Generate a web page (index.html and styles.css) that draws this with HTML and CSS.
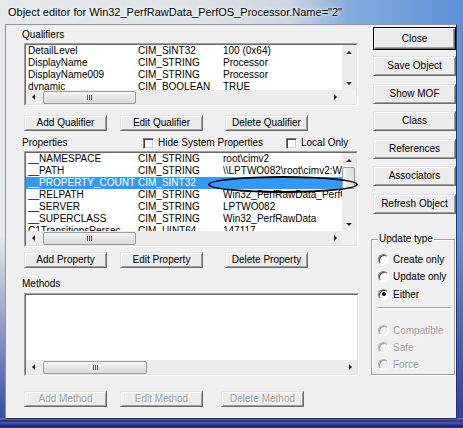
FILE: index.html
```html
<!DOCTYPE html>
<html>
<head>
<meta charset="utf-8">
<title>Object editor</title>
<link rel="stylesheet" href="styles.css">
</head>
<body>
<div class="window">
  <div class="titlebar"><span class="title">Object editor for Win32_PerfRawData_PerfOS_Processor.Name="2"</span></div>
  <div class="client">
    <div class="main">
      <div class="label">Qualifiers</div>
      <div class="listbox lb-qual">
        <div class="lb-inner">
          <div class="rows">
            <div class="row"><span class="c-name">DetailLevel</span><span class="c-type">CIM_SINT32</span><span class="c-val">100 (0x64)</span></div>
            <div class="row"><span class="c-name">DisplayName</span><span class="c-type">CIM_STRING</span><span class="c-val">Processor</span></div>
            <div class="row"><span class="c-name">DisplayName009</span><span class="c-type">CIM_STRING</span><span class="c-val">Processor</span></div>
            <div class="row"><span class="c-name">dynamic</span><span class="c-type">CIM_BOOLEAN</span><span class="c-val">TRUE</span></div>
          </div>
          <div class="vscroll"><span class="arr up"></span><span class="arr down"></span></div>
          <div class="hscroll"><span class="arr left"></span><span class="thumb"><i class="grip"></i></span><span class="spacer"></span><span class="arr right"></span></div>
          <div class="corner"></div>
        </div>
      </div>
      <div class="btnrow">
        <button class="btn">Add Qualifier</button>
        <button class="btn">Edit Qualifier</button>
        <button class="btn del">Delete Qualifier</button>
      </div>
      <div class="proprow">
        <span class="plabel">Properties</span>
        <span class="chk-wrap"><span class="chk"></span>Hide System Properties</span>
        <span class="chk-wrap"><span class="chk"></span>Local Only</span>
      </div>
      <div class="listbox lb-props">
        <div class="lb-inner">
          <div class="rows">
            <div class="row"><span class="c-name">__NAMESPACE</span><span class="c-type">CIM_STRING</span><span class="c-val">root\cimv2</span></div>
            <div class="row"><span class="c-name">__PATH</span><span class="c-type">CIM_STRING</span><span class="c-val">\\LPTWO082\root\cimv2:Win32_PerfRawData_PerfOS_Processor.Name="2"</span></div>
            <div class="row sel"><span class="c-name">__PROPERTY_COUNT</span><span class="c-type">CIM_SINT32</span><span class="c-val"></span></div>
            <div class="row"><span class="c-name">__RELPATH</span><span class="c-type">CIM_STRING</span><span class="c-val">Win32_PerfRawData_PerfOS_Processor.Name="2"</span></div>
            <div class="row"><span class="c-name">__SERVER</span><span class="c-type">CIM_STRING</span><span class="c-val">LPTWO082</span></div>
            <div class="row"><span class="c-name">__SUPERCLASS</span><span class="c-type">CIM_STRING</span><span class="c-val">Win32_PerfRawData</span></div>
            <div class="row"><span class="c-name">C1TransitionsPersec</span><span class="c-type">CIM_UINT64</span><span class="c-val">147117</span></div>
          </div>
          <div class="vscroll"><span class="arr up"></span><span class="vthumb"></span><span class="spacer"></span><span class="arr down"></span></div>
          <div class="hscroll"><span class="arr left"></span><span class="thumb"><i class="grip"></i></span><span class="spacer"></span><span class="arr right"></span></div>
          <div class="corner"></div>
        </div>
        <div class="ellipse"></div>
      </div>
      <div class="btnrow btnrow-props">
        <button class="btn">Add Property</button>
        <button class="btn">Edit Property</button>
        <button class="btn del">Delete Property</button>
      </div>
      <div class="label label-methods">Methods</div>
      <div class="listbox lb-methods">
        <div class="lb-inner nov">
          <div class="rows"></div>
          <div class="hscroll"><span class="arr left"></span><span class="thumb thumb-wide"><i class="grip"></i></span><span class="spacer"></span><span class="arr right"></span></div>
        </div>
      </div>
      <div class="btnrow btnrow-methods">
        <button class="btn disabled">Add Method</button>
        <button class="btn disabled">Edit Method</button>
        <button class="btn disabled del-m">Delete Method</button>
      </div>
    </div>
    <div class="side">
      <button class="sbtn default">Close</button>
      <button class="sbtn">Save Object</button>
      <button class="sbtn">Show MOF</button>
      <button class="sbtn">Class</button>
      <button class="sbtn">References</button>
      <button class="sbtn">Associators</button>
      <button class="sbtn">Refresh Object</button>
      <fieldset class="group">
        <legend>Update type</legend>
        <div class="radio r1"><span class="rb"></span>Create only</div>
        <div class="radio r2"><span class="rb"></span>Update only</div>
        <div class="radio r3"><span class="rb checked"></span>Either</div>
        <div class="sep"></div>
        <div class="radio r4 off"><span class="rb"></span>Compatible</div>
        <div class="radio r5 off"><span class="rb"></span>Safe</div>
        <div class="radio r6 off"><span class="rb"></span>Force</div>
      </fieldset>
    </div>
  </div>
</div>
</body>
</html>
```
FILE: styles.css
```css
* { box-sizing: border-box; }
html, body { margin: 0; padding: 0; }
body {
  width: 463px;
  height: 428px;
  overflow: hidden;
  font-family: "Liberation Sans", Arial, sans-serif;
  font-size: 10px;
  color: #000;
}
.window {
  width: 463px;
  height: 428px;
  display: flex;
  flex-direction: column;
  background:
    linear-gradient(to bottom, #6a7cc4 0, #23307f 3px, #4b5da9 5px, #1a2470 8px, #2a3a8a 10px) left bottom / 100% 10px no-repeat,
    linear-gradient(to bottom, rgba(40, 64, 150, 0) 55%, rgba(36, 58, 150, 0.85) 96%),
    linear-gradient(90deg, #e6e9ec 0%, #dfe3e7 40%, #ccd7e3 62%, #86acdc 75%, #5c90d5 100%);
}
.titlebar {
  height: 24px;
  flex: none;
  padding-left: 8px;
  display: flex;
  align-items: center;
  font-size: 11px;
}
.title { text-shadow: 0 0 6px #fff, 0 0 3px #fff; white-space: nowrap; }
.client {
  flex: none;
  height: 395px;
  margin: 0 6px 9px 5px;
  background: #f0f0f0;
  border: 1px solid;
  border-color: #8c97a4 #26306a #26306a #8c97a4;
  display: flex;
  padding-left: 16px;
}
.main { width: 338px; flex: none; display: flex; flex-direction: column; }
.side { width: 85px; flex: none; margin-left: auto; display: flex; flex-direction: column; }

.label { height: 12px; line-height: 12px; margin-top: 4px; white-space: nowrap; }
.label-methods { margin-top: 10px; }

.listbox {
  margin-left: 2px;
  width: 334px;
  border: 1px solid;
  border-color: #a0a0a0 #fff #fff #a0a0a0;
  position: relative;
}
.lb-inner {
  height: 100%;
  border: 1px solid;
  border-color: #696969 #e3e3e3 #e3e3e3 #696969;
  background: #fff;
  display: grid;
  grid-template-columns: 1fr 14px;
  grid-template-rows: 1fr 14px;
}
.lb-inner.nov { grid-template-columns: 1fr; }
.lb-qual { height: 63px; margin-top: 2px; }
.lb-props { height: 96px; margin-top: 2px; }
.lb-methods { height: 83px; margin-top: 3px; width: 335px; }

.rows { overflow: hidden; min-width: 0; }
.row {
  height: 12px;
  line-height: 12px;
  display: grid;
  grid-template-columns: 110px 85px 1fr;
  padding-left: 2px;
  white-space: nowrap;
}
.row .c-val { overflow: hidden; }
.row.sel { background: #3399ff; color: #fff; }

.vscroll {
  background: #ececec;
  display: flex;
  flex-direction: column;
  justify-content: space-between;
}
.hscroll {
  background: #ececec;
  display: flex;
  align-items: center;
  min-width: 0;
}
.corner { background: #f0f0f0; }
.spacer { flex: 1; }
.arr {
  width: 14px;
  height: 14px;
  flex: none;
  display: flex;
  align-items: center;
  justify-content: center;
}
.arr::before { content: ""; width: 0; height: 0; }
.arr.up::before { border-left: 3px solid transparent; border-right: 3px solid transparent; border-bottom: 3px solid #222; }
.arr.down::before { border-left: 3px solid transparent; border-right: 3px solid transparent; border-top: 3px solid #222; }
.arr.left::before { border-top: 3px solid transparent; border-bottom: 3px solid transparent; border-right: 3px solid #222; }
.arr.right::before { border-top: 3px solid transparent; border-bottom: 3px solid transparent; border-left: 3px solid #222; }
.thumb {
  width: 93px;
  height: 13px;
  margin-left: 3px;
  flex: none;
  border: 1px solid #9c9c9c;
  border-radius: 2px;
  background: linear-gradient(#f7f7f7, #e6e6e6 50%, #d9d9d9);
  display: flex;
  align-items: center;
  justify-content: center;
}
.thumb-wide { width: 104px; }
.grip {
  display: block;
  width: 1px;
  height: 5px;
  margin-left: -4px;
  background: #555;
  box-shadow: 2px 0 #555, 4px 0 #555;
}
.vthumb {
  width: 13px;
  height: 22px;
  flex: none;
  border: 1px solid #9c9c9c;
  border-radius: 2px;
  background: linear-gradient(90deg, #f7f7f7, #e6e6e6 50%, #d9d9d9);
}
.ellipse {
  position: absolute;
  left: 183px;
  top: 24px;
  width: 150px;
  height: 17px;
  border: 2px solid #000;
  border-radius: 50%;
  pointer-events: none;
}

.btnrow { display: flex; margin-left: 2px; height: 16px; margin-top: 9px; flex: none; }
.btnrow-props { margin-top: 5px; }
.btnrow-methods { margin-top: 15px; }
.btn, .sbtn {
  font-family: inherit;
  font-size: 10px;
  color: #000;
  padding: 0;
  margin: 0;
  background: #ececec;
  border: 1px solid;
  border-color: #e3e3e3 #696969 #696969 #e3e3e3;
  box-shadow: inset 1px 1px #fff, inset -1px -1px #a0a0a0;
  white-space: nowrap;
  line-height: 12px;
}
.btn { width: 83px; height: 16px; flex: none; }
.btn + .btn { margin-left: 13px; }
.btn + .btn.del { margin-left: 22px; }
.btn + .btn.del-m { margin-left: 18px; }
.btn.disabled { color: #a0a0a0; text-shadow: 1px 1px 0 #fff; }

.proprow { display: flex; height: 12px; line-height: 12px; margin-top: 6px; white-space: nowrap; flex: none; }
.plabel { width: 121px; flex: none; }
.chk-wrap { width: 143px; flex: none; display: flex; align-items: center; }
.chk {
  width: 11px;
  height: 11px;
  margin-right: 4px;
  flex: none;
  background: #fff;
  border: 1px solid;
  border-color: #808080 #fff #fff #808080;
  box-shadow: inset 1px 1px #404040, inset -1px -1px #d4d0c8;
}

.sbtn { width: 83px; height: 20px; margin-left: 2px; flex: none; margin-top: 7px; }
.sbtn:nth-child(odd) { margin-top: 8px; }
.sbtn.default {
  height: 23px;
  margin-top: 2px;
  border: 1px solid #000;
  box-shadow: inset 1px 1px #fff, inset -1px -1px #696969, inset -2px -2px #a0a0a0;
}
.sbtn:nth-child(2) { margin-top: 6px; }

.group {
  margin: 19px 0 0 0;
  width: 84px;
  padding: 8px 3px 4px 6px;
  border: 1px solid #a0a0a0;
  box-shadow: inset 1px 1px #fff, 1px 1px #fff;
  min-inline-size: 0;
}
.group legend { padding: 0 1px; line-height: 12px; font-size: 10px; }
.radio { display: flex; align-items: center; height: 12px; white-space: nowrap; }
.r2 { margin-top: 5px; }
.r3 { margin-top: 6px; }
.sep { height: 2px; margin-top: 7px; margin-left: -1px; border-top: 1px solid #a0a0a0; border-bottom: 1px solid #fff; }
.r4 { margin-top: 15px; }
.r5 { margin-top: 5px; }
.r6 { margin-top: 5px; }
.rb {
  width: 11px;
  height: 11px;
  flex: none;
  margin-right: 4px;
  border-radius: 50%;
  border: 1px solid;
  border-color: #808080 #fff #fff #808080;
  box-shadow: inset 1px 1px #404040;
  background: #fff;
  display: flex;
  align-items: center;
  justify-content: center;
}
.rb.checked::after { content: ""; width: 4px; height: 4px; border-radius: 50%; background: #000; }
.radio.off { color: #a0a0a0; text-shadow: 1px 1px 0 #fff; }
.radio.off .rb { background: #f0f0f0; border-color: #b0b0b0 #fff #fff #b0b0b0; box-shadow: inset 1px 1px #a0a0a0; }
```
